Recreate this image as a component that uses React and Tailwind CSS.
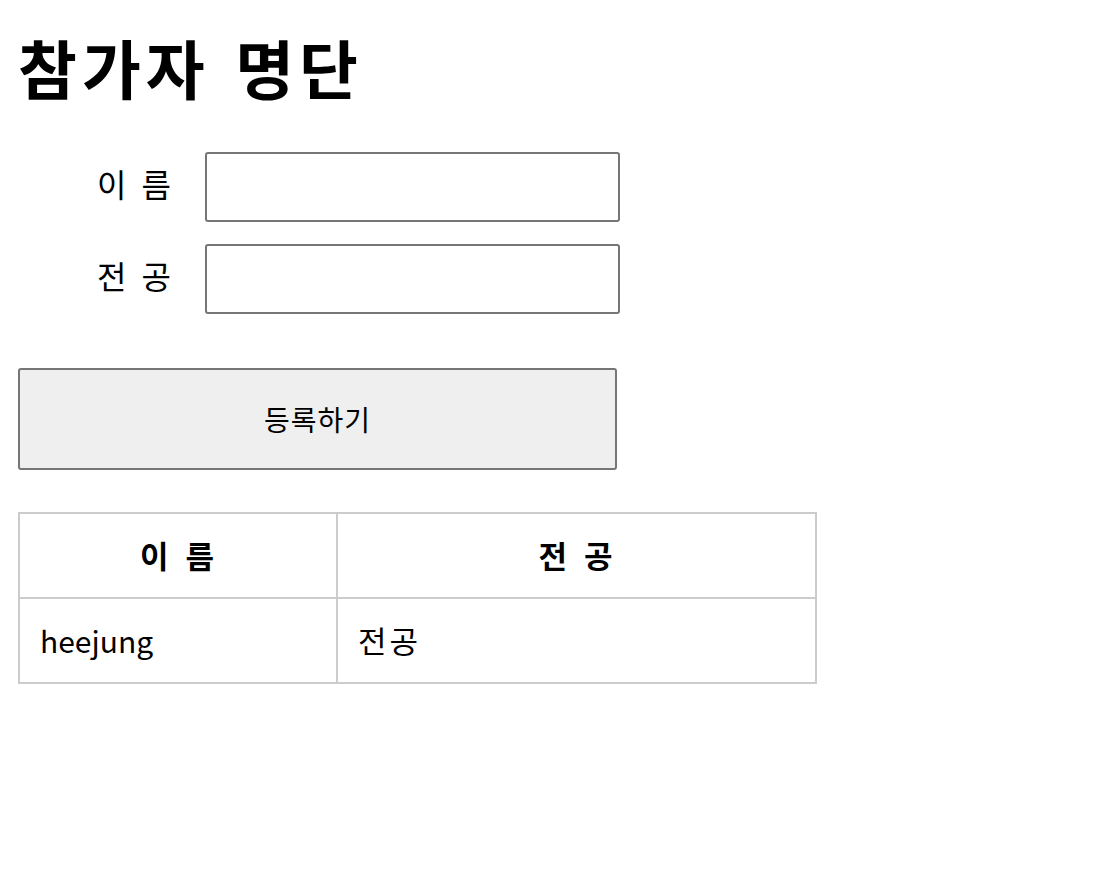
export default function App() {
  const font = { fontFamily: '"Noto Sans CJK KR", "Noto Sans", sans-serif' };
  return (
    <div className="bg-white text-black min-h-[876px] pl-[18px] pt-[20px]" style={font}>
      <h1 className="text-[64px] font-bold leading-[92px] m-0 tracking-[5px] [word-spacing:6px]">참가자 명단</h1>
      <div className="mt-[40px] flex flex-col gap-[22px]">
        <div className="flex items-center">
          <label className="w-[187px] text-right pr-[32px] text-[32px] tracking-[2px] [word-spacing:4px] pb-[8px]">이 름</label>
          <input className="w-[415px] h-[70px] border-2 border-[#767676] rounded-[3px] bg-white" />
        </div>
        <div className="flex items-center">
          <label className="w-[187px] text-right pr-[32px] text-[32px] tracking-[2px] [word-spacing:4px] pb-[8px]">전 공</label>
          <input className="w-[415px] h-[70px] border-2 border-[#767676] rounded-[3px] bg-white" />
        </div>
      </div>
      <button className="mt-[54px] w-[599px] h-[102px] bg-[#efefef] border-2 border-[#767676] rounded-[3px] text-[28px] tracking-[1px] block">
        등록하기
      </button>
      <table className="mt-[42px] border-collapse w-[799px]">
        <thead>
          <tr className="h-[85px]">
            <th className="w-[318px] border-2 border-[#cccccc] text-[31px] font-bold text-center tracking-[2px] [word-spacing:6px]">이 름</th>
            <th className="border-2 border-[#cccccc] text-[31px] font-bold text-center tracking-[2px] [word-spacing:6px]">전 공</th>
          </tr>
        </thead>
        <tbody>
          <tr className="h-[85px]">
            <td className="border-2 border-[#cccccc] text-[30px] text-left pl-[20px]">heejung</td>
            <td className="border-2 border-[#cccccc] text-[31px] text-left pl-[20px] tracking-[3px]">전공</td>
          </tr>
        </tbody>
      </table>
    </div>
  );
}
